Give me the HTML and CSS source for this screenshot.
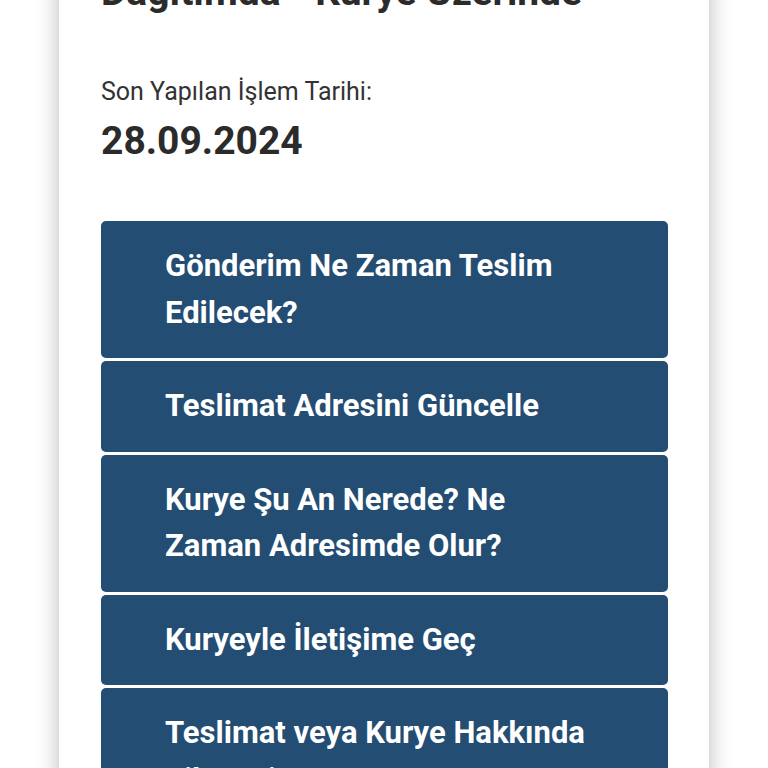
FILE: index.html
```html
<!DOCTYPE html>
<html lang="tr">
<head>
    <meta charset="UTF-8">
    <meta name="viewport" content="width=device-width, initial-scale=1.0">
    <title>Gönderi Takip</title>
    <link rel="stylesheet" href="styles.css">
</head>
<body>
    <div class="card">
        <h1 class="status-title">Dağıtımda - Kurye Üzerinde</h1>

        <div class="last-action">
            <p class="label">Son Yapılan İşlem Tarihi:</p>
            <p class="date">28.09.2024</p>
        </div>

        <div class="actions">
            <a class="action" href="#">Gönderim Ne Zaman Teslim Edilecek?</a>
            <a class="action" href="#">Teslimat Adresini Güncelle</a>
            <a class="action" href="#">Kurye Şu An Nerede? Ne Zaman Adresimde Olur?</a>
            <a class="action" href="#">Kuryeyle İletişime Geç</a>
            <a class="action" href="#">Teslimat veya Kurye Hakkında Şikayetim Var</a>
        </div>
    </div>
</body>
</html>
```

FILE: styles.css
```css
body {
    margin: 0;
    padding: 0;
    background: #fff;
    font-family: Roboto, "Liberation Sans", sans-serif;
    color: #2b2b2b;
    overflow: hidden;
}

.card {
    width: 650px;
    margin: 0 auto;
    padding: 0 41px 40px 42px;
    box-sizing: border-box;
    background: #fff;
    min-height: 900px;
    box-shadow: 0 0 22px rgba(0, 0, 0, 0.28);
}

.status-title {
    margin: -28px 0 0;
    font-size: 39px;
    line-height: 40px;
    font-weight: 700;
    color: #2b2b2b;
}

.last-action {
    margin-top: 65px;
}

.label {
    margin: 0;
    font-size: 25px;
    line-height: 30px;
    color: #333;
}

.date {
    margin: 11px 0 0;
    font-size: 39px;
    line-height: 46px;
    font-weight: 700;
    color: #2b2b2b;
}

.actions {
    margin-top: 57px;
    display: flex;
    flex-direction: column;
    gap: 3px;
}

.action {
    display: block;
    padding: 22px 70px 22px 64px;
    background: #234d73;
    border-radius: 5px;
    color: #fff;
    font-size: 31px;
    line-height: 46.5px;
    font-weight: 700;
    text-decoration: none;
}
```
